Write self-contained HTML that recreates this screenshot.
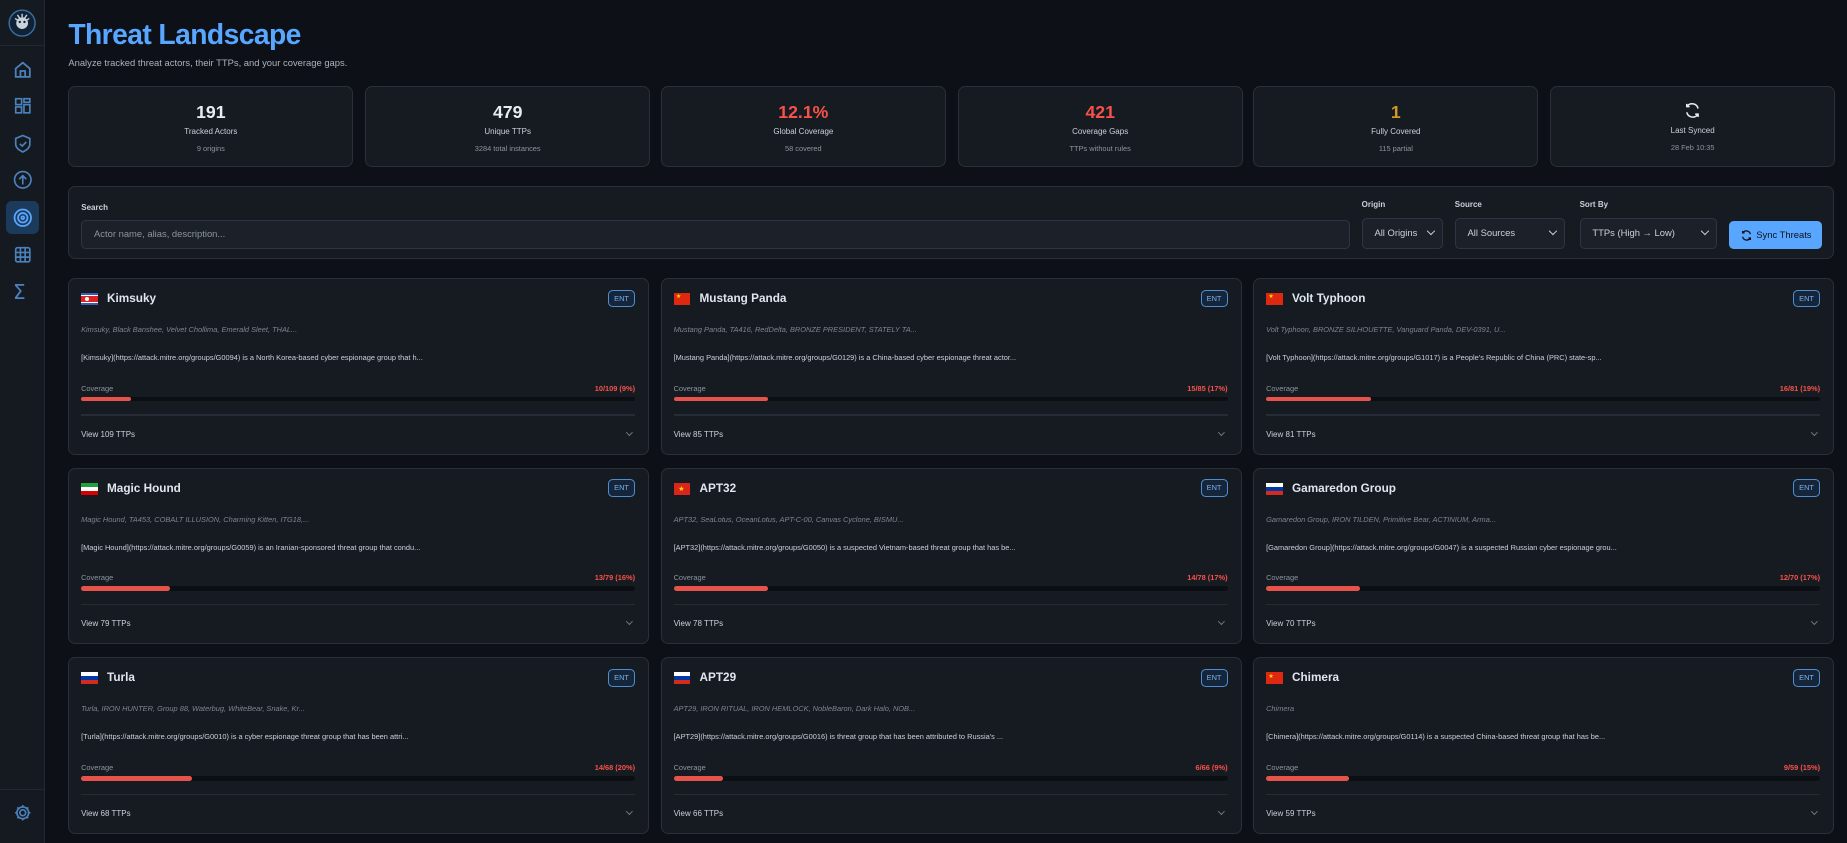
<!DOCTYPE html>
<html><head><meta charset="utf-8"><style>
*{box-sizing:border-box;margin:0;padding:0}
html,body{width:1847px;height:843px;overflow:hidden;background:#0d1117}
#w{zoom:1.17793;width:1568px;height:716px;position:relative;font-family:"Liberation Sans",sans-serif;color:#e6edf3;background:#0d1117}
.sb{position:absolute;left:0;top:0;width:38px;height:716px;background:#151a21;border-right:1px solid #222831}
.sb .hr{position:absolute;left:0;width:38px;height:1px;background:#222831}
.ic{position:absolute;left:9px;width:20px;height:20px}
.act{position:absolute;left:5px;top:171px;width:28px;height:28px;border-radius:5px;background:#1b3a5c}
h1{position:absolute;left:58px;top:15px;font-size:24px;font-weight:700;color:#58a6ff;letter-spacing:-.5px}
.sub{position:absolute;left:58px;top:48px;font-size:8px;color:#aab2bd}
.stat{position:absolute;top:73px;width:242px;height:69px;background:#161b22;border:1px solid #2a3039;border-radius:6px;text-align:center}
.stat b{display:block;margin-top:13px;font-size:15px;line-height:18px}
.stat .l{font-size:6.8px;color:#c9d1d9;margin-top:3px}
.stat .s{font-size:6.3px;color:#8b949e;margin-top:7px}
.fp{position:absolute;left:58px;top:158px;width:1499px;height:62px;background:#161b22;border:1px solid #2a3039;border-radius:6px}
.lab{position:absolute;font-size:6.8px;font-weight:700;color:#c9d1d9}
.in{position:absolute;height:26px;border:1px solid #2f3540;border-radius:4px;background:#1c2129;font-size:8px;color:#c9d1d9;padding:0 10px;line-height:24px}
.in .cv{position:absolute;right:7px;top:8px;width:5px;height:5px;border-right:1.6px solid #c9d1d9;border-bottom:1.6px solid #c9d1d9;transform:rotate(45deg)}
.btn{position:absolute;left:1468px;top:188px;width:79px;height:23px;background:#58a6ff;border-radius:4px;color:#0d1117;font-size:8px;line-height:23px;padding-left:23px}
.card{position:absolute;width:493px;height:150px;background:#161b22;border:1px solid #2a3039;border-radius:6px}
.fl{position:absolute;left:10px;top:12px;width:14px;height:10px;overflow:hidden}
.nm{position:absolute;left:32px;top:11px;font-size:10px;font-weight:700;color:#dfe6ee}
.ent{position:absolute;right:11px;top:9px;width:23px;height:15px;border:1px solid #4f8cd0;border-radius:4px;font-size:6.3px;color:#79b0ee;text-align:center;line-height:13px;background:#16263a}
.al{position:absolute;left:10px;top:39px;font-size:6.3px;font-style:italic;color:#7d8590}
.ds{position:absolute;left:10px;top:63px;font-size:6.3px;color:#c9d1d9}
.cl{position:absolute;left:10px;top:89px;font-size:6.3px;color:#8b949e}
.cn{position:absolute;right:11px;top:89px;font-size:6.3px;font-weight:700;color:#f85149}
.tr{position:absolute;left:10px;right:11px;top:100px;height:4px;background:#0b0f14;border-radius:2px}
.tr i{position:absolute;left:0;top:0;height:4px;background:#e5534b;border-radius:2px}
.dv{position:absolute;left:10px;right:11px;top:115px;height:1px;background:#262c35}
.vt{position:absolute;left:10px;top:128px;font-size:6.8px;color:#c9d1d9}
.ch{position:absolute;right:14px;top:128px;width:4px;height:4px;border-right:1px solid #6e7681;border-bottom:1px solid #6e7681;transform:rotate(45deg)}
</style></head><body><div id="w">
<div class="sb">
<svg class="ic" style="top:8px;left:7px;width:24px;height:24px" viewBox="0 0 24 24"><circle cx="12" cy="12" r="11" fill="#0f2236" stroke="#3d6fa3" stroke-width="1.2"/><circle cx="12" cy="12" r="5" fill="#c9d1d9"/><path d="M6 8l3 2M18 8l-3 2M8 5l2 3M16 5l-2 3M12 4v3" stroke="#c9d1d9" stroke-width="1.2"/><circle cx="10" cy="11" r="1" fill="#0f2236"/><circle cx="14" cy="11" r="1" fill="#0f2236"/></svg>
<div class="hr" style="top:38px"></div>
<svg class="ic" style="top:49px" viewBox="0 0 20 20" fill="none" stroke="#4b82bd" stroke-width="1.5"><path d="M4 9l6-5 6 5v7H4z M8 16v-5h4v5"/></svg>
<svg class="ic" style="top:80px" viewBox="0 0 20 20" fill="none" stroke="#4b82bd" stroke-width="1.4"><rect x="4" y="4" width="5" height="5"/><rect x="11" y="4" width="5" height="3"/><rect x="11" y="9" width="5" height="7"/><rect x="4" y="11" width="5" height="5"/></svg>
<svg class="ic" style="top:112px" viewBox="0 0 20 20" fill="none" stroke="#4b82bd" stroke-width="1.4"><path d="M10 3l6 2.5v5c0 3-3 5-6 6.5-3-1.5-6-3.5-6-6.5v-5z M7.5 10l2 2 3.5-3.5"/></svg>
<svg class="ic" style="top:143px" viewBox="0 0 20 20" fill="none" stroke="#4b82bd" stroke-width="1.4"><circle cx="10" cy="10" r="7"/><path d="M10 14V7M7 9.5l3-3 3 3"/></svg>
<div class="act"></div>
<svg class="ic" style="top:175px" viewBox="0 0 20 20" fill="none" stroke="#58a6ff" stroke-width="1.5"><circle cx="10" cy="10" r="7"/><circle cx="10" cy="10" r="4"/><circle cx="10" cy="10" r="1.2"/></svg>
<svg class="ic" style="top:206px" viewBox="0 0 20 20" fill="none" stroke="#4b82bd" stroke-width="1.4"><rect x="4" y="4" width="12" height="12" rx="1.5"/><path d="M8 4v12M12 4v12M4 8h12M4 12h12"/></svg>
<div style="position:absolute;left:11px;top:238px;font-size:17px;color:#4b82bd;font-family:'DejaVu Sans',sans-serif">Σ</div>
<div class="hr" style="top:670px"></div>
<svg class="ic" style="top:680px" viewBox="0 0 20 20" fill="none" stroke="#4b82bd" stroke-width="1.4"><circle cx="10" cy="10" r="2.5"/><path d="M10 3.5v2M10 14.5v2M3.5 10h2M14.5 10h2M5.4 5.4l1.4 1.4M13.2 13.2l1.4 1.4M5.4 14.6l1.4-1.4M13.2 6.8l1.4-1.4"/><circle cx="10" cy="10" r="5"/></svg>
</div>
<h1>Threat Landscape</h1>
<div class="sub">Analyze tracked threat actors, their TTPs, and your coverage gaps.</div>
<div class="stat" style="left:58px"><b>191</b><div class="l">Tracked Actors</div><div class="s">9 origins</div></div>
<div class="stat" style="left:310px"><b>479</b><div class="l">Unique TTPs</div><div class="s">3284 total instances</div></div>
<div class="stat" style="left:561px"><b style="color:#f85149">12.1%</b><div class="l">Global Coverage</div><div class="s">58 covered</div></div>
<div class="stat" style="left:813px"><b style="color:#f85149">421</b><div class="l">Coverage Gaps</div><div class="s">TTPs without rules</div></div>
<div class="stat" style="left:1064px"><b style="color:#d29922">1</b><div class="l">Fully Covered</div><div class="s">115 partial</div></div>
<div class="stat" style="left:1316px"><svg style="margin-top:12px" width="16" height="16" viewBox="0 0 20 20" fill="none" stroke="#e6edf3" stroke-width="1.6"><path d="M16 8a6.5 6.5 0 0 0-11.5-2.5M4 12a6.5 6.5 0 0 0 11.5 2.5M4 3v3h3M16 17v-3h-3"/></svg><div class="l" style="margin-top:1px">Last Synced</div><div class="s">28 Feb 10:35</div></div>
<div class="fp"></div>
<div class="lab" style="left:69px;top:172px">Search</div>
<div class="in" style="left:69px;top:187px;width:1077px;height:24px;line-height:22px;color:#8b949e">Actor name, alias, description...</div>
<div class="lab" style="left:1156px;top:170px">Origin</div>
<div class="in" style="left:1156px;top:185px;width:69px">All Origins<span class="cv"></span></div>
<div class="lab" style="left:1235px;top:170px">Source</div>
<div class="in" style="left:1235px;top:185px;width:94px">All Sources<span class="cv"></span></div>
<div class="lab" style="left:1341px;top:170px">Sort By</div>
<div class="in" style="left:1341px;top:185px;width:117px">TTPs (High → Low)<span class="cv"></span></div>
<div class="btn"><svg style="position:absolute;left:9px;top:6px" width="11" height="11" viewBox="0 0 20 20" fill="none" stroke="#0d1117" stroke-width="2"><path d="M16 8a6.5 6.5 0 0 0-11.5-2.5M4 12a6.5 6.5 0 0 0 11.5 2.5M4 3v3h3M16 17v-3h-3"/></svg>Sync Threats</div>

<div class="card" style="left:58px;top:236px"><div class="fl" style="background:linear-gradient(#3b5bb5 0 18%,#fff 18% 25%,#d22 25% 75%,#fff 75% 82%,#3b5bb5 82%)"><span style="position:absolute;left:3px;top:3px;width:4px;height:4px;border-radius:50%;background:#fff"></span></div><div class="nm">Kimsuky</div><div class="ent">ENT</div><div class="al">Kimsuky, Black Banshee, Velvet Chollima, Emerald Sleet, THAL...</div><div class="ds">[Kimsuky](https://attack.mitre.org/groups/G0094) is a North Korea-based cyber espionage group that h...</div><div class="cl">Coverage</div><div class="cn">10/109 (9%)</div><div class="tr"><i style="width:9%"></i></div><div class="dv"></div><div class="vt">View 109 TTPs</div><div class="ch"></div></div>

<div class="card" style="left:561px;top:236px"><div class="fl" style="background:#de2910"><span style="position:absolute;left:2px;top:1px;color:#ffde00;font-size:5px">★</span></div><div class="nm">Mustang Panda</div><div class="ent">ENT</div><div class="al">Mustang Panda, TA416, RedDelta, BRONZE PRESIDENT, STATELY TA...</div><div class="ds">[Mustang Panda](https://attack.mitre.org/groups/G0129) is a China-based cyber espionage threat actor...</div><div class="cl">Coverage</div><div class="cn">15/85 (17%)</div><div class="tr"><i style="width:17%"></i></div><div class="dv"></div><div class="vt">View 85 TTPs</div><div class="ch"></div></div>

<div class="card" style="left:1064px;top:236px"><div class="fl" style="background:#de2910"><span style="position:absolute;left:2px;top:1px;color:#ffde00;font-size:5px">★</span></div><div class="nm">Volt Typhoon</div><div class="ent">ENT</div><div class="al">Volt Typhoon, BRONZE SILHOUETTE, Vanguard Panda, DEV-0391, U...</div><div class="ds">[Volt Typhoon](https://attack.mitre.org/groups/G1017) is a People's Republic of China (PRC) state-sp...</div><div class="cl">Coverage</div><div class="cn">16/81 (19%)</div><div class="tr"><i style="width:19%"></i></div><div class="dv"></div><div class="vt">View 81 TTPs</div><div class="ch"></div></div>

<div class="card" style="left:58px;top:397px"><div class="fl" style="background:linear-gradient(#239f40 0 33%,#fff 33% 67%,#da0000 67%)"></div><div class="nm">Magic Hound</div><div class="ent">ENT</div><div class="al">Magic Hound, TA453, COBALT ILLUSION, Charming Kitten, ITG18,...</div><div class="ds">[Magic Hound](https://attack.mitre.org/groups/G0059) is an Iranian-sponsored threat group that condu...</div><div class="cl">Coverage</div><div class="cn">13/79 (16%)</div><div class="tr"><i style="width:16%"></i></div><div class="dv"></div><div class="vt">View 79 TTPs</div><div class="ch"></div></div>

<div class="card" style="left:561px;top:397px"><div class="fl" style="background:#da251d"><span style="position:absolute;left:4px;top:1px;color:#ffde00;font-size:6px">★</span></div><div class="nm">APT32</div><div class="ent">ENT</div><div class="al">APT32, SeaLotus, OceanLotus, APT-C-00, Canvas Cyclone, BISMU...</div><div class="ds">[APT32](https://attack.mitre.org/groups/G0050) is a suspected Vietnam-based threat group that has be...</div><div class="cl">Coverage</div><div class="cn">14/78 (17%)</div><div class="tr"><i style="width:17%"></i></div><div class="dv"></div><div class="vt">View 78 TTPs</div><div class="ch"></div></div>

<div class="card" style="left:1064px;top:397px"><div class="fl" style="background:linear-gradient(#fff 0 33%,#0039a6 33% 67%,#d52b1e 67%)"></div><div class="nm">Gamaredon Group</div><div class="ent">ENT</div><div class="al">Gamaredon Group, IRON TILDEN, Primitive Bear, ACTINIUM, Arma...</div><div class="ds">[Gamaredon Group](https://attack.mitre.org/groups/G0047) is a suspected Russian cyber espionage grou...</div><div class="cl">Coverage</div><div class="cn">12/70 (17%)</div><div class="tr"><i style="width:17%"></i></div><div class="dv"></div><div class="vt">View 70 TTPs</div><div class="ch"></div></div>

<div class="card" style="left:58px;top:558px"><div class="fl" style="background:linear-gradient(#fff 0 33%,#0039a6 33% 67%,#d52b1e 67%)"></div><div class="nm">Turla</div><div class="ent">ENT</div><div class="al">Turla, IRON HUNTER, Group 88, Waterbug, WhiteBear, Snake, Kr...</div><div class="ds">[Turla](https://attack.mitre.org/groups/G0010) is a cyber espionage threat group that has been attri...</div><div class="cl">Coverage</div><div class="cn">14/68 (20%)</div><div class="tr"><i style="width:20%"></i></div><div class="dv"></div><div class="vt">View 68 TTPs</div><div class="ch"></div></div>

<div class="card" style="left:561px;top:558px"><div class="fl" style="background:linear-gradient(#fff 0 33%,#0039a6 33% 67%,#d52b1e 67%)"></div><div class="nm">APT29</div><div class="ent">ENT</div><div class="al">APT29, IRON RITUAL, IRON HEMLOCK, NobleBaron, Dark Halo, NOB...</div><div class="ds">[APT29](https://attack.mitre.org/groups/G0016) is threat group that has been attributed to Russia's ...</div><div class="cl">Coverage</div><div class="cn">6/66 (9%)</div><div class="tr"><i style="width:9%"></i></div><div class="dv"></div><div class="vt">View 66 TTPs</div><div class="ch"></div></div>

<div class="card" style="left:1064px;top:558px"><div class="fl" style="background:#de2910"><span style="position:absolute;left:2px;top:1px;color:#ffde00;font-size:5px">★</span></div><div class="nm">Chimera</div><div class="ent">ENT</div><div class="al">Chimera</div><div class="ds">[Chimera](https://attack.mitre.org/groups/G0114) is a suspected China-based threat group that has be...</div><div class="cl">Coverage</div><div class="cn">9/59 (15%)</div><div class="tr"><i style="width:15%"></i></div><div class="dv"></div><div class="vt">View 59 TTPs</div><div class="ch"></div></div>
</div></body></html>
